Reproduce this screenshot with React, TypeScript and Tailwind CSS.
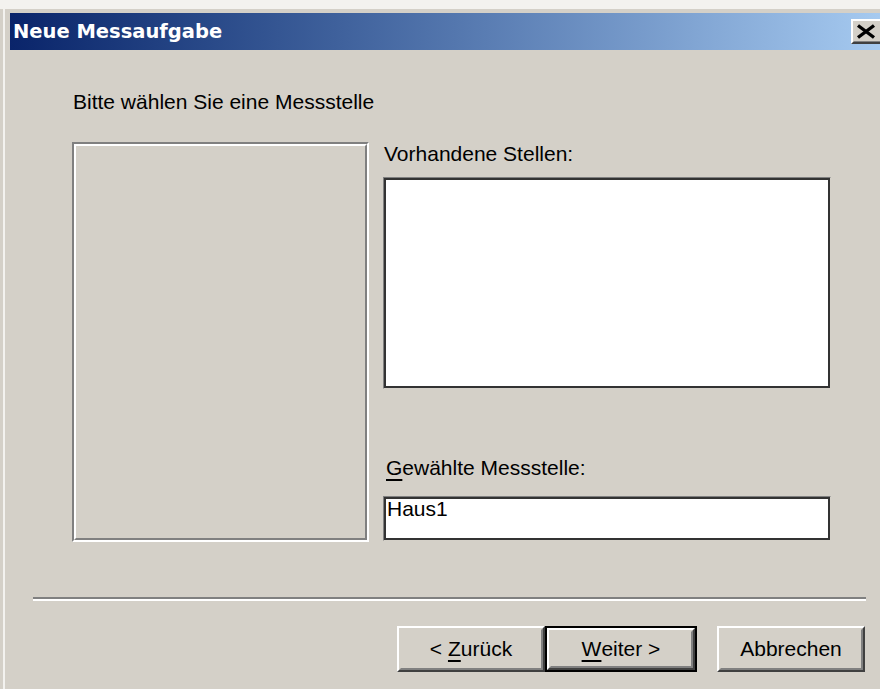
import React from 'react';

const sans = { fontFamily: '"Liberation Sans", Arial, sans-serif' };

// Classic raised 3D push button, optional default-button frame
const WinButton = ({
  children,
  isDefault,
  className,
}: {
  children: React.ReactNode;
  isDefault?: boolean;
  className?: string;
}) => {
  const face = (
    <div className="h-full w-full border-2 border-t-white border-l-white border-b-[#404040] border-r-[#404040]">
      <div className="flex h-full w-full items-center justify-center whitespace-pre border-2 border-t-[#d4d0c8] border-l-[#d4d0c8] border-b-[#808080] border-r-[#808080] text-[21px] leading-[24px] text-black">
        {children}
      </div>
    </div>
  );
  if (isDefault) {
    return <div className={`border-2 border-black ${className ?? ''}`}>{face}</div>;
  }
  return <div className={className}>{face}</div>;
};

// Sunken white field (list box / edit control)
const Sunken = ({ className, children }: { className?: string; children?: React.ReactNode }) => (
  <div className={`border border-[#808080] border-r-[#d4d0c8] border-b-[#d4d0c8] ${className ?? ''}`}>
    <div className="h-full w-full border-2 border-[#333333] bg-white">{children}</div>
  </div>
);

const Mnemonic = ({ ch }: { ch: string }) => (
  <span className="underline decoration-[1.5px] underline-offset-[4px]">{ch}</span>
);

export default function App() {
  return (
    <div className="h-[689px] w-[880px] overflow-hidden bg-[#d4d0c8]" style={sans}>
      <div className="h-[9px] bg-[#f3f2ef]" />
      <div className="flex">
        {/* window frame, left edge */}
        <div className="flex h-[680px] w-[10px]">
          <div className="w-[3px] bg-[#d4d0c8]" />
          <div className="w-[2px] bg-[#f3f2ef]" />
          <div className="w-[5px] bg-[#d4d0c8]" />
        </div>

        <div className="flex w-[870px] flex-col">
          {/* caption bar */}
          <div className="mt-[4px] flex h-[37px] items-center bg-gradient-to-r from-[#0a246a] to-[#a6caf0]">
            <span
              className="ml-[3px] text-[19.5px] font-bold leading-none text-white"
              style={{ fontFamily: '"DejaVu Sans", Verdana, sans-serif' }}
            >
              Neue Messaufgabe
            </span>
            <div className="-mr-[3px] ml-auto h-[25px] w-[32px] border-2 border-t-white border-l-white border-b-[#404040] border-r-[#404040]">
              <div className="flex h-full w-full items-center justify-center border border-b-[#808080] border-r-[#808080] border-t-[#d4d0c8] border-l-[#d4d0c8] bg-[#d4d0c8]">
                <svg width="20" height="15" viewBox="0 0 20 15" className="-ml-[3px]">
                  <path d="M2 1.5 L18 13.5 M18 1.5 L2 13.5" stroke="#000" strokeWidth="3.4" />
                </svg>
              </div>
            </div>
          </div>

          {/* dialog body */}
          <div className="flex flex-col">
            <div className="ml-[63px] mt-[40px] text-[21px] leading-[24px] text-black">
              Bitte wählen Sie eine Messstelle
            </div>

            <div className="ml-[62px] mt-[28px] flex gap-[14px]">
              {/* etched frame */}
              <div className="h-[400px] w-[297px] border-2 border-t-[#808080] border-l-[#808080] border-b-white border-r-white">
                <div className="h-full w-full border-2 border-t-white border-l-white border-b-[#808080] border-r-[#808080]" />
              </div>

              <div className="flex w-[448px] flex-col">
                <div className="pl-[1px] text-[21px] leading-[24px] text-black">Vorhandene Stellen:</div>
                <Sunken className="mt-[11px] h-[212px]" />
                <div className="mt-[67px] pl-[3px] text-[21px] leading-[24px] text-black">
                  <Mnemonic ch="G" />ewählte Messstelle:
                </div>
                <Sunken className="mt-[16px] h-[45px]">
                  <div className="pl-[1px] text-[21px] leading-[20px] text-black">Haus1</div>
                </Sunken>
              </div>
            </div>

            {/* separator */}
            <div className="ml-[23px] mt-[55px] w-[833px]">
              <div className="h-[2px] bg-[#808080]" />
              <div className="h-[2px] bg-white" />
            </div>

            <div className="ml-[387px] mt-[25px] flex">
              <WinButton className="h-[46px] w-[148px]">
                {'< '}
                <Mnemonic ch="Z" />
                {'urück'}
              </WinButton>
              <WinButton isDefault className="h-[46px] w-[152px]">
                <Mnemonic ch="W" />
                {'eiter >'}
              </WinButton>
              <WinButton className="ml-[20px] h-[46px] w-[148px]">Abbrechen</WinButton>
            </div>
          </div>
        </div>
      </div>
    </div>
  );
}
